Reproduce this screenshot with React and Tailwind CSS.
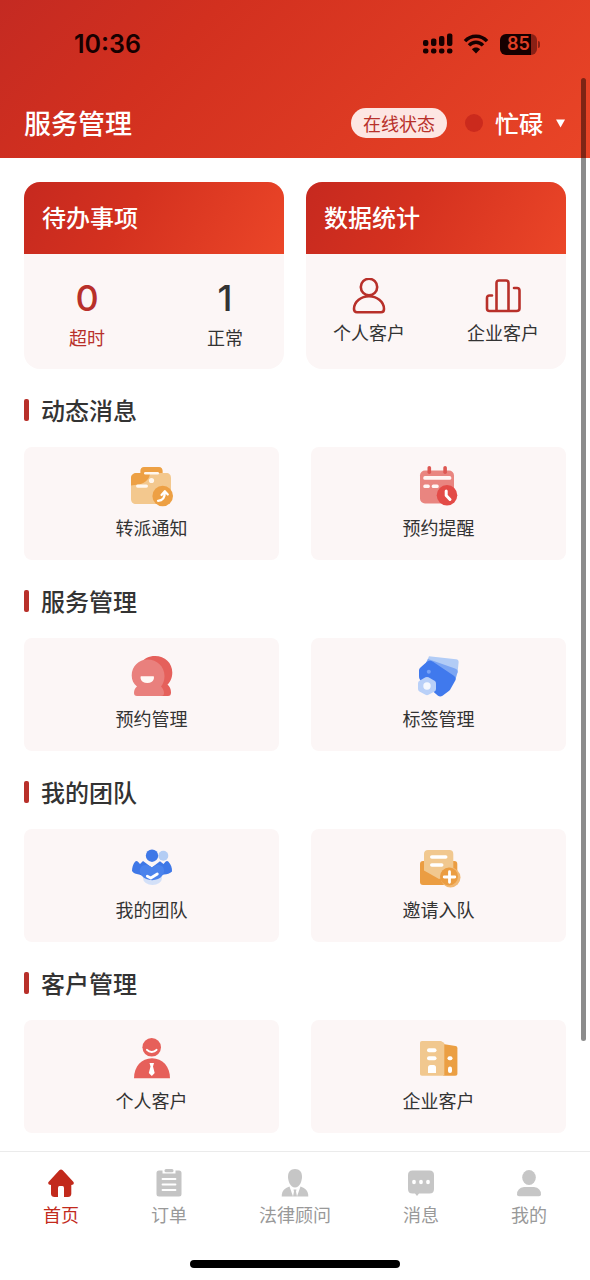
import React, { useState } from "react";

function SignalIcon() {
  return (
    <svg width="30" height="22" viewBox="0 0 30 22" fill="#160000" aria-hidden="true">
      <rect x="0" y="7" width="5.4" height="6" rx="2" />
      <rect x="8" y="5.500" width="5.400" height="7.500" rx="2" />
      <rect x="16" y="3" width="5.400" height="10" rx="2" />
      <rect x="24" y="0.500" width="5.400" height="12.500" rx="2" />
      <rect x="0" y="15.500" width="5.400" height="5" rx="2" />
      <rect x="8" y="15.500" width="5.400" height="5" rx="2" />
      <rect x="16" y="15.500" width="5.400" height="5" rx="2" />
      <rect x="24" y="15.500" width="5.400" height="5" rx="2" />
    </svg>
  );
}

function WifiIcon() {
  return (
    <svg width="26" height="20" viewBox="0 0 26 20" fill="none" aria-hidden="true">
      <path d="M2 7.2C8 0.6 18 0.6 24 7.2" stroke="#160000" strokeWidth="3.4" />
      <path d="M6 11.4C10 7.2 16 7.2 20 11.4" stroke="#160000" strokeWidth="3.4" />
      <path d="M13 19.4L8.9 15.2C11.2 12.9 14.8 12.9 17.1 15.2Z" fill="#160000" />
    </svg>
  );
}

function PersonOutlineIcon() {
  return (
    <svg width="36" height="38" viewBox="0 0 36 38" fill="none" stroke="#b8302a" strokeWidth="2.6" aria-hidden="true">
      <circle cx="18" cy="9" r="8.2" />
      <path d="M18 18.300C25.500 18.300 33 23.500 33 31C33 33 32 34.300 30 34.300H6C4 34.300 3 33 3 31C3 23.500 10.500 18.300 18 18.300Z" />
    </svg>
  );
}

function ChartOutlineIcon() {
  return (
    <svg width="36" height="38" viewBox="0 0 36 38" fill="none" stroke="#b8302a" strokeWidth="2.6" strokeLinecap="round" aria-hidden="true">
      <path d="M11.500 32.500V5C11.500 3.400 12.400 2.500 14 2.500H21C22.600 2.500 23.500 3.400 23.500 5V32.500" />
      <path d="M7 17.500H4.500C2.900 17.500 2 18.400 2 20V30.500C2 32.100 2.900 33 4.500 33H31.500C33.100 33 34.500 32.100 34.500 30.500V12.500C34.500 10.900 33.600 10 32 10H29" />
    </svg>
  );
}

function TransferIcon() {
  return (
    <svg width="44" height="44" viewBox="1 0 44 44" aria-hidden="true">
      <path d="M8 9H11.500V7C11.500 4.500 13 3 15.500 3H29.500C32 3 33.500 4.500 33.500 7V9H37C40.500 9 42 11 42 14V35C42 38 40 40 37 40H7C4 40 2 38 2 35V14C2 11 4.500 9 8 9Z" fill="#f3c88e" />
      <path d="M8 9H11.500V7C11.500 4.500 13 3 15.500 3H29.500C32 3 33.500 4.500 33.500 7V9H21C21 14 17 19 10 20.500C7 21 4 21.200 2 21.500V14C2 11 4.500 9 8 9Z" fill="#eda044" />
      <rect x="15" y="8" width="15" height="2.400" rx="1.200" fill="#fff7ee" />
      <rect x="7" y="20.500" width="12" height="3.200" rx="1.600" fill="#fff7ee" />
      <circle cx="22.500" cy="16.500" r="2.600" fill="#fff7ee" />
      <circle cx="33.700" cy="32" r="10.300" fill="#eda044" />
      <path d="M29 36.800C33.500 36.500 36 34 35.800 28.500M32.500 31L35.800 27.200L38.800 30.500" fill="none" stroke="#fff" strokeWidth="2.200" strokeLinecap="round" strokeLinejoin="round" />
    </svg>
  );
}

function ReminderIcon() {
  return (
    <svg width="44" height="44" viewBox="1 0 44 44" aria-hidden="true">
      <rect x="4" y="6.500" width="34" height="33" rx="5" fill="#e98580" />
      <rect x="11.500" y="2" width="3.600" height="8" rx="1.800" fill="#dd5752" />
      <rect x="27.300" y="2" width="3.600" height="8" rx="1.800" fill="#dd5752" />
      <rect x="7.300" y="12" width="28" height="3.800" rx="1.600" fill="#fff5f4" />
      <rect x="7.300" y="20.500" width="6.500" height="3.600" rx="1.600" fill="#fff5f4" />
      <rect x="15.700" y="20.500" width="7" height="3.600" rx="1.600" fill="#fff5f4" />
      <circle cx="31" cy="31.300" r="10.300" fill="#e34b47" />
      <path d="M30.200 27V31.500L34 35.500" fill="none" stroke="#fff" strokeWidth="3" strokeLinecap="round" strokeLinejoin="round" />
    </svg>
  );
}

function BookingIcon() {
  return (
    <svg width="44" height="44" viewBox="1 0 44 44" aria-hidden="true">
      <path d="M26 1C36 1 43.300 8 43.300 17.500C43.300 23 41 27.500 38.500 29.500C40.500 31 42 34 42 37.500C42 40 41 41 39 41H20L12 8C15 3.500 20 1 26 1Z" fill="#e5605b" />
      <path d="M18.500 4.500C28 4.500 35.500 11.500 35.500 21C35.500 25.500 34 29 32 31.500C34 33.500 35 36 35 38C35 40 34 41 32 41H8C6 41 5 40 5 38C5 35 6 33 8 31.500C4.500 29 2.700 25 2.700 20.500C2.700 11.500 9.500 4.500 18.500 4.500Z" fill="#e9807d" />
      <path d="M12 21.200H24.500C25.500 21.200 25.500 28 18.300 28C11 28 11 21.200 12 21.200Z" fill="#fff9f6" />
    </svg>
  );
}

function TagIcon() {
  return (
    <svg width="44" height="44" viewBox="1 0 44 44" aria-hidden="true">
      <path d="M13 1.200L40 4.200C42 4.500 42.800 5.500 42.600 7.500L41.500 18L30 20L10 8Z" fill="#b2ccf6" />
      <path d="M12 4L39 13.500C41.500 14.500 42 15.500 41.500 17.500L39 26L28 24L10 8Z" fill="#7ba5f3" />
      <path d="M5 12L11 6.800C13 5.300 15 5.500 17 6.800L37.500 20.500C39.800 22 40.200 23.800 39 26L34.500 34C34 35 33.500 35.500 32.500 36.200L26.500 40.700C25 41.800 23.500 41.800 22 40.700L5 26C3.500 24.500 3 23 3 21V16C3 14 3.500 13.300 5 12Z" fill="#4079ed" />
      <circle cx="12.800" cy="16.800" r="2" fill="#77a2f6" />
      <path d="M9.500 22.300Q11 21.500 12.500 22.300L18.500 25.800Q20 26.700 20 28.300V34Q20 35.600 18.500 36.500L12.500 39.800Q11 40.600 9.500 39.800L3.500 36.500Q2 35.600 2 34V28.300Q2 26.700 3.500 25.800Z" fill="#b9d0f8" />
      <circle cx="11" cy="31" r="3.700" fill="#f5f8fe" />
    </svg>
  );
}

function TeamIcon() {
  return (
    <svg width="44" height="44" viewBox="1 0 44 44" aria-hidden="true">
      <circle cx="34.300" cy="9.700" r="5" fill="#b4cdf4" />
      <circle cx="23" cy="9.700" r="6.200" fill="#3f78e7" />
      <ellipse cx="23.500" cy="32" rx="9.500" ry="7" fill="#d3e0f8" />
      <path d="M6 15.800C7 14.800 8 14.800 9 15.800L11 18L14 15L22.800 21.500L31 15.200L34.500 18L36.500 15.800C37.500 14.800 38.500 14.800 39.500 15.800C42 18.500 43.200 22 43 25.500C41 27.500 38 28.200 35 28.500L23 33L10 28.500C7 28 4.500 27.300 3 25C3 21.500 4 18.300 6 15.800Z" fill="#3f78e7" />
      <path d="M13 20C16.500 18.200 20 18.800 22.800 21.500C26 18.800 29.500 18.200 33 20C36 22.500 35.500 27 33 30C29.500 35.500 17 35.500 13 30C10 27 10 22.500 13 20Z" fill="#4b83ec" />
      <path d="M18.300 30.200L21.800 32L28.300 28" fill="none" stroke="#fff" strokeWidth="2.800" strokeLinecap="round" strokeLinejoin="round" />
    </svg>
  );
}

function InviteIcon() {
  return (
    <svg width="44" height="44" viewBox="1 0 44 44" aria-hidden="true">
      <rect x="4" y="15" width="37.300" height="24" rx="3" fill="#eb9d42" />
      <path d="M8 8C8 5.500 9.500 4 12 4H33.500C36 4 37.300 5.500 37.300 8V28L23 33L8 24.500Z" fill="#f1c88f" />
      <rect x="14" y="9.200" width="17.500" height="3.600" rx="1.800" fill="#fff" />
      <rect x="14" y="17.200" width="13.500" height="3.600" rx="1.800" fill="#fff" />
      <circle cx="34.500" cy="31.500" r="10" fill="#f1b873" />
      <circle cx="33" cy="30.500" r="9" fill="#eb9d42" />
      <path d="M33.500 25.700V36.300M28.200 31H38.800" stroke="#fff" strokeWidth="2.800" strokeLinecap="round" />
    </svg>
  );
}

function ClientIcon() {
  return (
    <svg width="44" height="44" viewBox="1 0 44 44" aria-hidden="true">
      <circle cx="22.700" cy="10.300" r="9.300" fill="#e6605a" />
      <path d="M18 12.800C20.500 15.600 25 15.600 27.500 12.800" fill="none" stroke="#fff" strokeWidth="2" strokeLinecap="round" />
      <path d="M5 41.300C5 29.500 12.500 21.300 23 21.300C33.500 21.300 41 29.500 41 41.300Z" fill="#e6605a" />
      <path d="M20.500 26H25L24 29.500L25.700 36L22.800 39L19.800 36L21.500 29.500Z" fill="#fff" />
    </svg>
  );
}

function CompanyIcon() {
  return (
    <svg width="44" height="44" viewBox="1 0 44 44" aria-hidden="true">
      <path d="M27 7L39.500 9C40.800 9.300 41.400 10 41.400 11.300V36.500C41.400 38 40.700 38.700 39.200 38.700H27Z" fill="#eb9f43" />
      <path d="M6 4H25L28.300 6V38.700H6C4.700 38.700 4 38 4 36.700V6C4 4.700 4.700 4 6 4Z" fill="#f1c88f" />
      <rect x="11" y="11.200" width="9.500" height="4" rx="2" fill="#fff" />
      <rect x="11" y="19.300" width="9.500" height="4" rx="2" fill="#fff" />
      <path d="M12 36V30.500Q12 28 14.500 28H17.500Q20 28 20 30.500V36Z" fill="#fff" />
      <rect x="31.500" y="19.300" width="5" height="4" rx="2" fill="#fff" />
      <rect x="32" y="29.500" width="4" height="6.500" rx="2" fill="#fff" />
    </svg>
  );
}

function HomeIcon() {
  return (
    <svg width="28" height="28" viewBox="0 0 28 28" fill="#c22a1c" aria-hidden="true">
      <path d="M12.300 1.200Q14 -0.200 15.700 1.200L26.500 13Q27.800 15.500 24.300 16V25Q24 28 21 28H17V19Q17 17 15.500 17H12.500Q11 17 11 19V28H7.500Q4.300 28 4 25V16Q0.200 15.500 1.500 13Z" />
    </svg>
  );
}

function OrderIcon() {
  return (
    <svg width="28" height="28" viewBox="0 0 28 28" aria-hidden="true">
      <path d="M4 1.500H7.500V4.500H20.500V1.500H24Q26.500 1.500 26.500 4V25Q26.500 27.500 24 27.500H4Q1.500 27.500 1.500 25V4Q1.500 1.500 4 1.500Z" fill="#c4c4c4" />
      <rect x="9.500" y="0" width="9" height="3.300" rx="1.500" fill="#c4c4c4" />
      <path d="M7.500 10H20.500M7.500 15.500H20.500M7.500 21H20.500" stroke="#fff" strokeWidth="1.800" strokeLinecap="round" />
    </svg>
  );
}

function LawyerIcon() {
  return (
    <svg width="28" height="28" viewBox="0 0 28 28" fill="#c6c6c6" aria-hidden="true">
      <path d="M14 0C18.500 0 21 3 21 7.500C21 12.500 18.500 18.500 14 18.500C9.500 18.500 7 12.500 7 7.500C7 3 9.500 0 14 0Z" />
      <path d="M8.500 17.500L12 27.500H0.700C0.700 21.500 3.500 19.500 8.500 17.500Z" />
      <path d="M19.500 17.500L16 27.500H27.300C27.300 21.500 24.500 19.500 19.500 17.500Z" />
      <path d="M12.500 20.500H15.500L15 22.500L16 27.500H12L13 22.500Z" />
    </svg>
  );
}

function MessageIcon() {
  return (
    <svg width="28" height="28" viewBox="0 0 28 28" fill="#c6c6c6" aria-hidden="true">
      <path d="M5.500 1.500H22.500Q27 1.500 27 6V20Q27 24.500 22.500 24.500H12L10 27L8 24.500H5.500Q1 24.500 1 20V6Q1 1.500 5.500 1.500Z" />
      <ellipse cx="7" cy="13" rx="1.900" ry="2.300" fill="#fff" />
      <ellipse cx="14" cy="13" rx="1.900" ry="2.300" fill="#fff" />
      <ellipse cx="21" cy="13" rx="1.900" ry="2.300" fill="#fff" />
    </svg>
  );
}

function MineIcon() {
  return (
    <svg width="28" height="28" viewBox="0 0 28 28" fill="#c6c6c6" aria-hidden="true">
      <ellipse cx="14" cy="8.500" rx="6.800" ry="7.500" />
      <path d="M9 18H19Q26 19 26 25.500Q26 27.300 24 27.300H4Q2 27.300 2 25.500Q2 19 9 18Z" />
    </svg>
  );
}

const sections = [
  {
    title: "动态消息",
    items: [
      { label: "转派通知", icon: TransferIcon },
      { label: "预约提醒", icon: ReminderIcon },
    ],
  },
  {
    title: "服务管理",
    items: [
      { label: "预约管理", icon: BookingIcon },
      { label: "标签管理", icon: TagIcon },
    ],
  },
  {
    title: "我的团队",
    items: [
      { label: "我的团队", icon: TeamIcon },
      { label: "邀请入队", icon: InviteIcon },
    ],
  },
  {
    title: "客户管理",
    items: [
      { label: "个人客户", icon: ClientIcon },
      { label: "企业客户", icon: CompanyIcon },
    ],
  },
];

const tabs = [
  { label: "首页", icon: HomeIcon },
  { label: "订单", icon: OrderIcon },
  { label: "法律顾问", icon: LawyerIcon },
  { label: "消息", icon: MessageIcon },
  { label: "我的", icon: MineIcon },
];

function SummaryCard({ title, children }) {
  return (
    <section className="flex-1 overflow-hidden rounded-2xl bg-[#fcf6f6]">
      <h2 className="bg-[linear-gradient(120deg,#c6291f,#d4311f_40%,#eb4628)] px-[18px] pt-[17px] pb-[19px] text-2xl leading-9 font-medium text-white">
        {title}
      </h2>
      {children}
    </section>
  );
}

function App() {
  const [status, setStatus] = useState("busy");
  const [activeTab, setActiveTab] = useState("首页");

  return (
    <div className="relative flex min-h-screen flex-col bg-white font-['Noto_Sans_CJK_SC',sans-serif] text-[#333]">
      <header className="bg-[linear-gradient(135deg,#c42a22,#d2301f_30%,#e94527)]">
        {/* Status bar */}
        <div className="flex h-[88px] items-center justify-between pr-[50px] pl-[74px] font-['Inter',sans-serif] text-[#160000]">
          <span className="pt-0.5 text-[25px] font-semibold">10:36</span>
          <div className="flex items-center">
            <SignalIcon />
            <span className="ml-[10px]">
              <WifiIcon />
            </span>
            <span className="ml-[11px] flex h-[21px] w-[37px] items-center justify-center rounded-md bg-[linear-gradient(90deg,#160000_85%,#8a2015_85%)] text-lg leading-none font-semibold text-[#e04026]">
              85
            </span>
            <span className="ml-px h-[7px] w-[2px] rounded-r bg-[#8a2015]" />
          </div>
        </div>

        <div className="flex h-[70px] items-center justify-between px-6 text-white">
          <h1 className="text-[27px] leading-10 font-medium">服务管理</h1>
          <div className="flex items-center">
            <label htmlFor="status" className="rounded-full bg-[#fde6e3] px-3 text-lg leading-[30px] text-[#b8302a]">
              在线状态
            </label>
            <span className="ml-[18px] h-[18px] w-[18px] rounded-full bg-[#cb2a1d]" />
            <div className="relative ml-3 flex items-center">
              <select
                id="status"
                value={status}
                onChange={(e) => setStatus(e.target.value)}
                className="w-[71px] appearance-none bg-transparent text-2xl leading-9 font-medium text-white outline-none"
              >
                <option value="busy">忙碌</option>
                <option value="online">在线</option>
              </select>
              <svg className="pointer-events-none absolute right-0" width="11" height="9" viewBox="0 0 11 9" fill="#fff" aria-hidden="true">
                <path d="M1 0.500H10L5.500 8.500Z" />
              </svg>
            </div>
          </div>
        </div>
      </header>

      <main className="flex-1 px-6 pt-6 pb-[18px]">
        <div className="flex gap-[22px]">
          <SummaryCard title="待办事项">
            <div className="flex justify-between pt-6 pr-[41px] pb-[18px] pl-[45px] text-center">
              <div className="text-[#b8302a]">
                <p className="font-['Inter',sans-serif] text-4xl leading-10 font-medium">0</p>
                <p className="mt-[5px] text-lg leading-7">超时</p>
              </div>
              <div>
                <p className="font-['Inter',sans-serif] text-4xl leading-10 font-medium">1</p>
                <p className="mt-[5px] text-lg leading-7">正常</p>
              </div>
            </div>
          </SummaryCard>
          <SummaryCard title="数据统计">
            <div className="flex justify-between px-[27px] pt-6">
              <a href="#personal" className="flex flex-col items-center">
                <PersonOutlineIcon />
                <span className="mt-0.5 text-lg leading-7">个人客户</span>
              </a>
              <a href="#company" className="flex flex-col items-center">
                <ChartOutlineIcon />
                <span className="mt-0.5 text-lg leading-7">企业客户</span>
              </a>
            </div>
          </SummaryCard>
        </div>

        {sections.map((section) => (
          <section key={section.title} className="mt-6">
            <h2 className="flex items-center gap-3 text-2xl leading-[34px] font-medium">
              <span className="h-[22px] w-[5px] rounded-xs bg-[#b8302a]" />
              {section.title}
            </h2>
            <div className="mt-5 grid grid-cols-2 gap-8">
              {section.items.map(({ label, icon: Icon }) => (
                <a
                  key={label}
                  href="#service"
                  className="flex flex-col items-center rounded-lg bg-[#fcf6f6] pt-[17px] pb-[19px]"
                >
                  <Icon />
                  <span className="mt-[5px] text-lg leading-7">{label}</span>
                </a>
              ))}
            </div>
          </section>
        ))}
      </main>

      {/* Scroll indicator */}
      <div className="pointer-events-none absolute top-[78px] right-1 bottom-[239px] w-[5px] rounded-full bg-black/45" />

      <footer className="border-t border-[#ebebeb] pb-3">
        <nav className="flex justify-between px-[43px] pt-[17px]">
          {tabs.map(({ label, icon: Icon }) => (
            <a
              key={label}
              href="#tab"
              onClick={() => setActiveTab(label)}
              className={
                activeTab === label
                  ? "flex flex-col items-center text-[#c22a1c]"
                  : "flex flex-col items-center text-[#999]"
              }
            >
              <Icon />
              <span className="mt-[5px] text-lg leading-6">{label}</span>
            </a>
          ))}
        </nav>
        <div className="mx-auto mt-[34px] h-2 w-[210px] rounded-full bg-black" />
      </footer>
    </div>
  );
}

export default App;
